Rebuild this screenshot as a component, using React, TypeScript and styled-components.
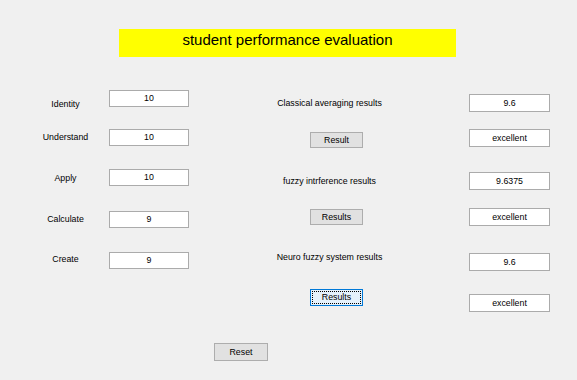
import React from "react";
import styled, { createGlobalStyle } from "styled-components";

const GlobalStyle = createGlobalStyle`
  html, body {
    margin: 0;
    padding: 0;
    background: #f0f0f0;
  }
  body {
    font-family: "Liberation Sans", Arial, sans-serif;
    color: #000;
  }
`;

const Window = styled.div`
  width: 577px;
  height: 380px;
  overflow: hidden;
  background: #f0f0f0;
  padding-top: 29px;
  box-sizing: border-box;
`;

const TitleBar = styled.div`
  margin-left: 119px;
  width: 337px;
  height: 28px;
  box-sizing: border-box;
  padding-top: 2px;
  background: #ffff00;
  font-size: 15px;
  line-height: 17px;
  text-align: center;
`;

const Main = styled.div`
  display: flex;
  align-items: flex-start;
  margin-top: 33px;
`;

const LeftPanel = styled.div`
  display: flex;
  flex-direction: column;
  margin-left: 40px;
  width: 149px;
`;

const FieldRow = styled.div<{ $gap: number }>`
  display: grid;
  grid-template-columns: 51px 80px;
  grid-template-rows: 17px;
  column-gap: 18px;
  align-items: start;
  margin-top: ${(p) => p.$gap}px;
`;

const FieldLabel = styled.div<{ $drop: number }>`
  font-size: 8.8px;
  line-height: 11px;
  text-align: center;
  white-space: nowrap;
  margin-top: ${(p) => p.$drop}px;
`;

const EditBox = styled.div<{ $h?: number; $gap?: number }>`
  box-sizing: border-box;
  height: ${(p) => p.$h ?? 17}px;
  margin-top: ${(p) => p.$gap ?? 0}px;
  background: #fff;
  border: 1px solid #ababab;
  font-size: 8.8px;
  line-height: ${(p) => (p.$h ?? 17) - 2}px;
  text-align: center;
  white-space: nowrap;
`;

const MiddlePanel = styled.div`
  display: flex;
  flex-direction: column;
  margin-left: 81px;
  width: 119px;
`;

const Caption = styled.div<{ $gap: number }>`
  margin-top: ${(p) => p.$gap}px;
  font-size: 8.8px;
  line-height: 11px;
  text-align: center;
  white-space: nowrap;
`;

const PushButton = styled.button<{ $gap: number; $focused?: boolean; $h?: number }>`
  box-sizing: border-box;
  margin: ${(p) => p.$gap}px 0 0 40px;
  width: 53px;
  height: ${(p) => p.$h ?? 16}px;
  padding: 0;
  font-family: "Liberation Sans", Arial, sans-serif;
  font-size: 8.8px;
  line-height: 11px;
  color: #000;
  background: ${(p) => (p.$focused ? "#e5f1fb" : "#e1e1e1")};
  border: 1px solid ${(p) => (p.$focused ? "#0078d7" : "#adadad")};
  outline: ${(p) => (p.$focused ? "1px dotted #000" : "none")};
  outline-offset: -3px;
  cursor: default;
`;

const RightPanel = styled.div`
  display: flex;
  flex-direction: column;
  margin-left: 80px;
  width: 81px;
`;

const ResetButton = styled.button`
  box-sizing: border-box;
  display: block;
  margin: 31px 0 0 214px;
  width: 54px;
  height: 18px;
  padding: 0;
  font-family: "Liberation Sans", Arial, sans-serif;
  font-size: 8.8px;
  color: #000;
  background: #e1e1e1;
  border: 1px solid #adadad;
  cursor: default;
`;

const fields = [
  { label: "Identity", value: "10", gap: 0, drop: 9 },
  { label: "Understand", value: "10", gap: 22, drop: 2.5 },
  { label: "Apply", value: "10", gap: 23, drop: 4 },
  { label: "Calculate", value: "9", gap: 25, drop: 2.5 },
  { label: "Create", value: "9", gap: 24, drop: 1.5 },
];

const results = [
  { value: "9.6", gap: 4 },
  { value: "excellent", gap: 17 },
  { value: "9.6375", gap: 25 },
  { value: "excellent", gap: 18 },
  { value: "9.6", gap: 27 },
  { value: "excellent", gap: 23 },
];

export default function App() {
  return (
    <>
      <GlobalStyle />
      <Window>
        <TitleBar>student performance evaluation</TitleBar>
        <Main>
          <LeftPanel>
            {fields.map((f) => (
              <FieldRow key={f.label} $gap={f.gap}>
                <FieldLabel $drop={f.drop}>{f.label}</FieldLabel>
                <EditBox>{f.value}</EditBox>
              </FieldRow>
            ))}
          </LeftPanel>
          <MiddlePanel>
            <Caption $gap={7.5}>Classical averaging results</Caption>
            <PushButton $gap={23.5}>Result</PushButton>
            <Caption $gap={27.5}>fuzzy intrference results</Caption>
            <PushButton $gap={22.5}>Results</PushButton>
            <Caption $gap={26.5}>Neuro fuzzy system results</Caption>
            <PushButton $gap={26.5} $focused $h={17}>
              Results
            </PushButton>
          </MiddlePanel>
          <RightPanel>
            {results.map((r, i) => (
              <EditBox key={i} $h={18} $gap={r.gap}>
                {r.value}
              </EditBox>
            ))}
          </RightPanel>
        </Main>
        <ResetButton>Reset</ResetButton>
      </Window>
    </>
  );
}
